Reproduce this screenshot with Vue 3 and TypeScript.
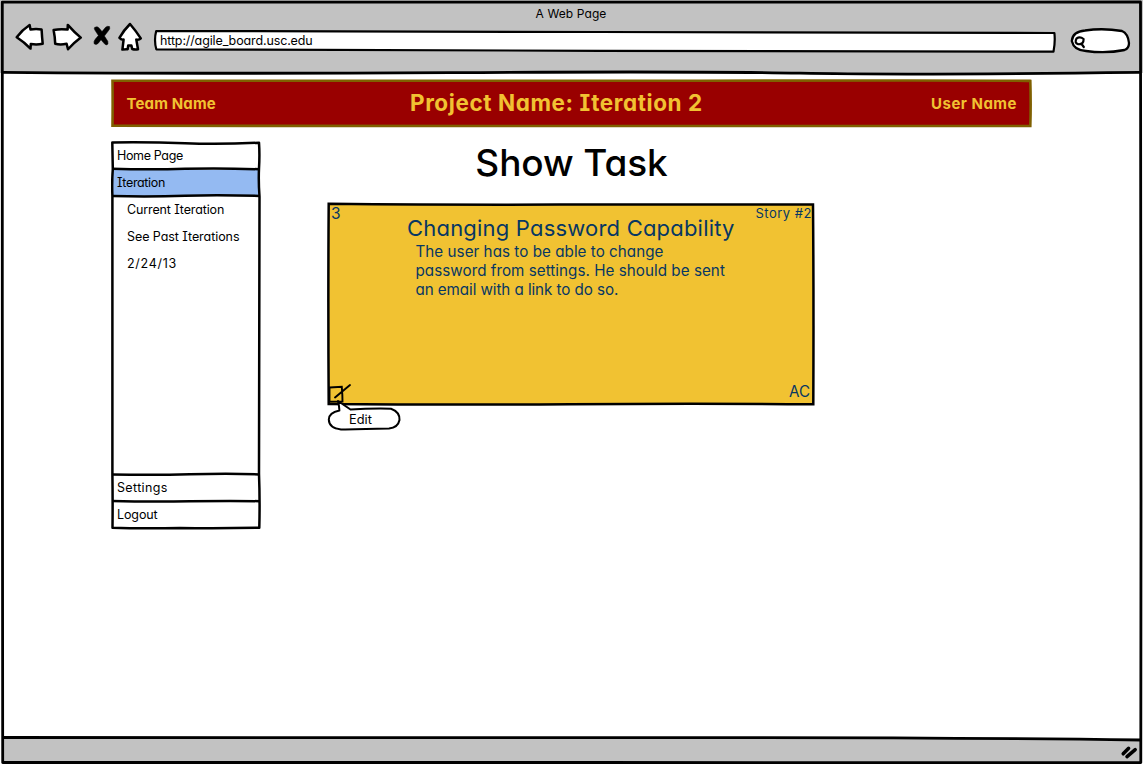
<script setup lang="ts">
interface Entry { label: string; cls: string }

const topItems: Entry[] = [
  { label: 'Home Page', cls: 'home' },
  { label: 'Iteration', cls: 'active' },
]
const subItems: Entry[] = [
  { label: 'Current Iteration', cls: 'current' },
  { label: 'See Past Iterations', cls: 'past' },
  { label: '2/24/13', cls: 'date' },
]
const bottomItems: Entry[] = [
  { label: 'Settings', cls: 'settings' },
  { label: 'Logout', cls: 'logout' },
]
const bodyLines: string[] = [
  'The user has to be able to change',
  'password from settings. He should be sent',
  'an email with a link to do so.',
]
</script>

<template>
  <div class="window">
    <header class="chrome">
      <div class="title"><span>A Web Page</span></div>
      <div class="toolbar">
        <svg class="nav" width="130" height="30" viewBox="14 22 130 30">
          <g fill="#fff" stroke="#000" stroke-width="2.5" stroke-linejoin="round" stroke-linecap="round">
            <path d="M16.7 37.3Q22 30 29.6 25L30.5 29.6Q36 28.6 41.6 29.6Q42 37 42.7 43.7Q37 45 30.8 44L30.5 48.6Q24 42 16.7 37.3Z" />
            <path d="M53.6 30Q60 28.8 67.6 29.6L67.8 24.9Q74 32 80.8 37.6Q73 43.5 68 49.3L66.6 43.8Q60 45 55.2 43.7Q55 37 53.6 30Z" />
            <path d="M130 24Q136 31 140.8 38.4Q139 40.3 136.3 39.6L138 49.2Q135 50 132.2 49L131.4 45.5H128.2L127.7 49.2Q125 49 122.4 49.6L123.6 39.6Q121 40 119.4 37.8Q124 30 130 24Z" />
          </g>
          <path d="M94.6 27.4Q97.5 25.6 99.5 28.4L102 31.6L105.6 27.3Q107.5 25.7 109.6 26.6Q110.4 28.5 108.4 30.8L104.4 36L107.8 41.3Q108.6 44 106.8 45Q104.8 44.8 103.4 42.6L101 39.7L98.3 43.2Q96 45.5 94 43.6Q93.4 41.3 95.4 39L98.4 35.6L95 30.3Q93.8 28.6 94.6 27.4Z" stroke="#000" stroke-width="0.5" />
        </svg>
        <div class="address">
          <svg class="sketch" width="904" height="24" viewBox="153 29 904 24">
            <path d="M156.2 31Q300 31.5 600 32Q800 31.5 1054.4 33Q1055.4 42 1053.5 51.6Q800 50.5 600 50.8Q300 50 156.3 49.3Q153.8 40 156.2 31Z" fill="#fff" stroke="#000" stroke-width="2.2" stroke-linejoin="round" />
          </svg>
          <span class="url">http://agile_board.usc.edu</span>
        </div>
        <svg class="search" width="62" height="27" viewBox="1070 27 62 27">
          <path d="M1071.8 41Q1072.5 31.5 1085 30.5Q1103 27.8 1122 31Q1128 33.5 1129 43Q1129 48.5 1124.5 50Q1106 53.8 1086 51Q1074 50.5 1071.8 41Z" fill="#fff" stroke="#000" stroke-width="2.3" />
          <path d="M1083.6 39Q1080 36.2 1076.6 38.4Q1074 43 1078.2 44.2Q1083.8 44.6 1083.6 39ZM1081.6 44L1083.8 47" fill="none" stroke="#000" stroke-width="2.2" stroke-linecap="round" stroke-linejoin="round" />
        </svg>
      </div>
    </header>

    <main class="page">
      <section class="banner">
        <svg class="sketch" width="922" height="50" viewBox="110 78 922 50">
          <path d="M112.5 80.8Q400 81.3 700 80.7T1030.3 80.9Q1031 104 1030.3 126Q800 126.5 500 126T112.5 125.8Q112.8 104 112.5 80.8Z" fill="#900" stroke="#7f6000" stroke-width="2.6" />
        </svg>
        <span class="team">Team Name</span>
        <span class="project">Project Name: Iteration 2</span>
        <span class="user">User Name</span>
      </section>

      <div class="columns">
        <nav class="menu">
          <svg class="sketch" width="150" height="389" viewBox="111 141 150 389">
            <path d="M113 170H259V196H113Z" fill="#94baf2" />
            <g fill="none" stroke="#000" stroke-width="2.5" stroke-linejoin="round">
              <path d="M112.3 142.5Q150 142 185 143.3T259 142.7Q259.8 155 259 168.5Q258.4 182 259.5 196.5L259 474Q260 500 259.3 527.7Q220 528.6 180 528Q140 528.7 112.5 527.7Q112.8 500 112.4 474V196Q111.8 182 112.8 169Z" />
              <path d="M112 168.8Q150 169.8 185 168.8T259.5 169.3" />
              <path d="M112 196Q150 196.9 185 195.7T259.5 196" />
              <path d="M112 474.4Q150 475.3 190 474.3T259.5 474.4" />
              <path d="M112 501Q150 502 190 501.3T259.5 501.2" />
            </g>
          </svg>
          <div v-for="i in topItems" :key="i.label" class="row"><span :class="i.cls">{{ i.label }}</span></div>
          <div class="sub">
            <div v-for="i in subItems" :key="i.label" class="row"><span :class="i.cls">{{ i.label }}</span></div>
          </div>
          <div v-for="i in bottomItems" :key="i.label" class="row"><span :class="i.cls">{{ i.label }}</span></div>
        </nav>

        <section class="task">
          <h1><span>Show Task</span></h1>
          <article class="card">
            <svg class="sketch" width="489" height="204" viewBox="327 202 489 204">
              <path d="M328.7 203.8Q450 205 560 204.6T813 204.5Q813.8 300 813.3 404.2Q690 403.3 570 404.2T328.7 403.9Q328 300 328.7 203.8Z" fill="#f1c232" stroke="#000" stroke-width="2.5" />
            </svg>
            <div class="card-top">
              <span class="points">3</span>
              <span class="story">Story #2</span>
            </div>
            <h2><span>Changing Password Capability</span></h2>
            <p class="desc">
              <span v-for="(l, n) in bodyLines" :key="n" :class="'line' + n">{{ l }}</span>
            </p>
            <span class="owner">AC</span>
            <div class="callout">
              <svg class="sketch" width="76" height="50" viewBox="326 383 76 50">
                <path d="M329.5 387.5L341.8 386.8Q342.5 395 342.5 401.5L329.5 401.7ZM335 397.5L350 385" fill="none" stroke="#000" stroke-width="1.9" stroke-linecap="round" />
                <path d="M338 401L350.5 409.5Q370 408.3 391 408.7Q400 412 399.5 420Q398 427.5 389 428.6Q362 429.5 341 429.4Q329 428 328.8 419.5Q329 412.5 339.4 410.5Q339.2 406 338 401Z" fill="#fff" stroke="#000" stroke-width="2" stroke-linejoin="round" />
              </svg>
              <span>Edit</span>
            </div>
          </article>
        </section>
      </div>
    </main>

    <footer class="status">
      <svg width="18" height="16" viewBox="1120 744 18 16">
        <path d="M1123.2 753.8L1128.6 748.3M1127 756.6L1135.2 749.6" stroke="#000" stroke-width="3.5" stroke-linecap="round" />
      </svg>
    </footer>

    <svg class="frame" width="1143" height="765" viewBox="0 0 1143 765">
      <path d="M3 737.5Q300 738.5 600 738T1141 740V762H3Z" fill="#c2c2c2" />
      <g fill="none" stroke="#000" stroke-width="2.8" stroke-linejoin="round">
        <path d="M2.3 2.2Q300 1.3 600 2.2T1140.5 2Q1139.7 300 1141 500L1140.8 762.6Q800 763.5 600 762.5T2.7 762.5Q1.7 500 2.3 300Z" />
        <path d="M3 72.3Q200 74 450 72.6T800 73.2T1140 72.4" />
        <path d="M3 737.5Q300 738.5 600 737.7T1141 740" />
      </g>
    </svg>
  </div>
</template>

<style>
html, body { margin: 0; background: #fff; overflow: hidden; }
</style>

<style scoped>
.window {
  position: relative;
  isolation: isolate;
  width: 1143px;
  height: 765px;
  display: flex;
  flex-direction: column;
  font-family: Inter, "Open Sans", sans-serif;
  font-feature-settings: "cv11", "cv08";
  font-size: 12.5px;
  color: #000;
  overflow: hidden;
}
.window span { white-space: nowrap; }
.frame { position: absolute; inset: 0; z-index: -1; }
.sketch { position: absolute; left: 0; top: 0; z-index: -1; }

.chrome { height: 73px; flex: none; background: #c2c2c2; position: relative; z-index: -2; }
.title { height: 22px; padding: 4px 1px 0 0; box-sizing: border-box; text-align: center; line-height: 20px; }
.title span { letter-spacing: 0.1px; font-size: 12px; }
.toolbar { display: flex; align-items: flex-start; padding-left: 14px; }
.nav { margin-right: 9px; }
.address { position: relative; width: 904px; height: 24px; margin-top: 7px; margin-right: 13px; z-index: 0; }
.url { display: block; padding-left: 7px; line-height: 24px; letter-spacing: -0.13px; }
.search { margin-top: 5px; }

.page { flex: 1; padding: 5px 0 0 110px; }
.banner {
  position: relative; width: 922px; height: 50px; box-sizing: border-box;
  padding: 0 15px 0 16.5px; display: grid; grid-template-columns: 283.5px 1fr auto; align-items: center;
  color: #f1c232; font-weight: 700; font-size: 15px;
}
.team { letter-spacing: 0.15px; }
.project { font-size: 22.5px; letter-spacing: 0.58px; padding-bottom: 2px; }
.user { letter-spacing: 0.5px; }
.columns { display: flex; padding-top: 13px; margin-left: 1px; }
.menu { position: relative; width: 150px; height: 389px; flex: none; padding-top: 1px; box-sizing: border-box; }
.row { height: 27px; line-height: 28px; padding-left: 6px; }
.sub { height: 278px; padding-left: 10px; }
.home, .active { letter-spacing: -0.35px; }
.current { letter-spacing: -0.12px; }
.past { letter-spacing: -0.06px; }
.date { letter-spacing: 0.7px; }
.settings { letter-spacing: 0.35px; }
.logout { letter-spacing: -0.1px; }

.task { margin-left: 66px; width: 489px; }
h1 { margin: 0; height: 61px; line-height: 43px; text-align: center; font-weight: 500; font-size: 37px; letter-spacing: -0.1px; }
.card { position: relative; height: 204px; color: #073763; display: flex; flex-direction: column; }
.card-top { display: flex; justify-content: space-between; padding: 0 4px; height: 15px; }
.points { font-size: 15.5px; line-height: 23px; }
.story { font-size: 13px; line-height: 22px; letter-spacing: 0.5px; }
h2 { margin: 0; font-weight: 400; font-size: 22px; line-height: 22px; padding-left: 80px; letter-spacing: 0.2px; }
.desc { margin: 3px 0 0 88.5px; font-size: 15.2px; line-height: 19px; display: flex; flex-direction: column; align-items: flex-start; }
.line0, .line1 { letter-spacing: 0.04px; }
.line2 { letter-spacing: -0.07px; }
.owner { margin: auto 6px 4px auto; font-size: 15.2px; line-height: 20px; }
.callout { position: absolute; left: -1px; top: 181px; width: 76px; height: 50px; color: #000; z-index: 1; }
.callout span { display: block; padding: 28px 0 0 23px; line-height: 18px; font-size: 12.8px; }

.status { height: 27px; flex: none; display: flex; justify-content: flex-end; padding: 6px 5px 0 0; box-sizing: border-box; }
</style>
